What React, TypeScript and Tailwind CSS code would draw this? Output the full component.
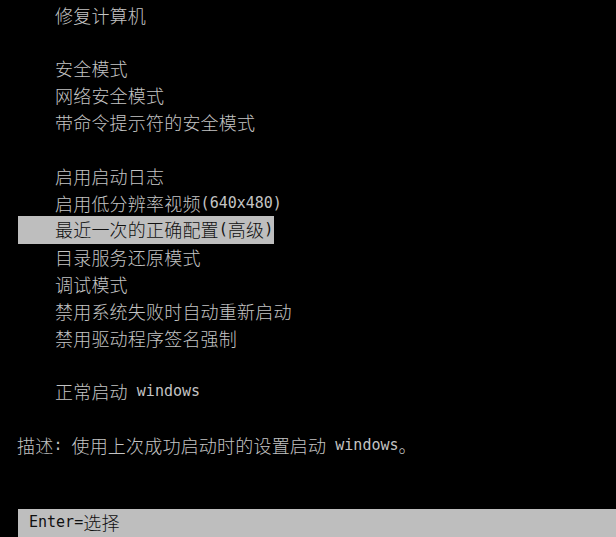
type Part = string | { m: string };

interface Row {
  parts?: Part[];
  active?: boolean;
}

const rows: Row[] = [
  { parts: ['修复计算机'] },
  {},
  { parts: ['安全模式'] },
  { parts: ['网络安全模式'] },
  { parts: ['带命令提示符的安全模式'] },
  {},
  { parts: ['启用启动日志'] },
  { parts: ['启用低分辨率视频', { m: '(640x480)' }] },
  { parts: ['最近一次的正确配置', { m: '(' }, '高级', { m: ')' }], active: true },
  { parts: ['目录服务还原模式'] },
  { parts: ['调试模式'] },
  { parts: ['禁用系统失败时自动重新启动'] },
  { parts: ['禁用驱动程序签名强制'] },
  {},
  { parts: ['正常启动', { m: ' windows' }] },
  {},
];

function Text({ parts }: { parts: Part[] }) {
  return (
    <>
      {parts.map((p, i) =>
        typeof p === 'string' ? (
          <span key={i} className="text-[18px] tracking-[0.2px] font-['Noto_Sans_CJK_SC',sans-serif] font-light">
            {p}
          </span>
        ) : (
          <span key={i} className="text-[15px] whitespace-pre font-['DejaVu_Sans_Mono',monospace]">
            {p.m}
          </span>
        )
      )}
    </>
  );
}

export default function App() {
  return (
    <div className="w-full h-[537px] pt-[2px] bg-black text-[#c4c4c4] overflow-hidden flex flex-col whitespace-nowrap">
      {rows.map((row, i) =>
        row.parts ? (
          <div key={i} className="h-[27px] leading-[27px] flex items-center">
            <div
              className={
                row.active
                  ? 'ml-[18px] pl-[37px] pr-[1px] h-[28px] -mt-[1px] flex items-center bg-[#bebebe] text-[#101010]'
                  : 'pl-[55px] flex items-center'
              }
            >
              <Text parts={row.parts} />
            </div>
          </div>
        ) : (
          <div key={i} className="h-[27px]" />
        )
      )}
      <div className="h-[27px] pl-[17px] flex items-center">
        <Text parts={['描述', { m: ': ' }, '使用上次成功启动时的设置启动', { m: ' windows' }, '。']} />
      </div>
      <div className="h-[51px]" />
      <div className="ml-[18px] flex-1 pl-[11px] pb-[1px] bg-[#bebebe] text-[#101010] flex items-center">
        <Text parts={[{ m: 'Enter=' }, '选择']} />
      </div>
    </div>
  );
}
